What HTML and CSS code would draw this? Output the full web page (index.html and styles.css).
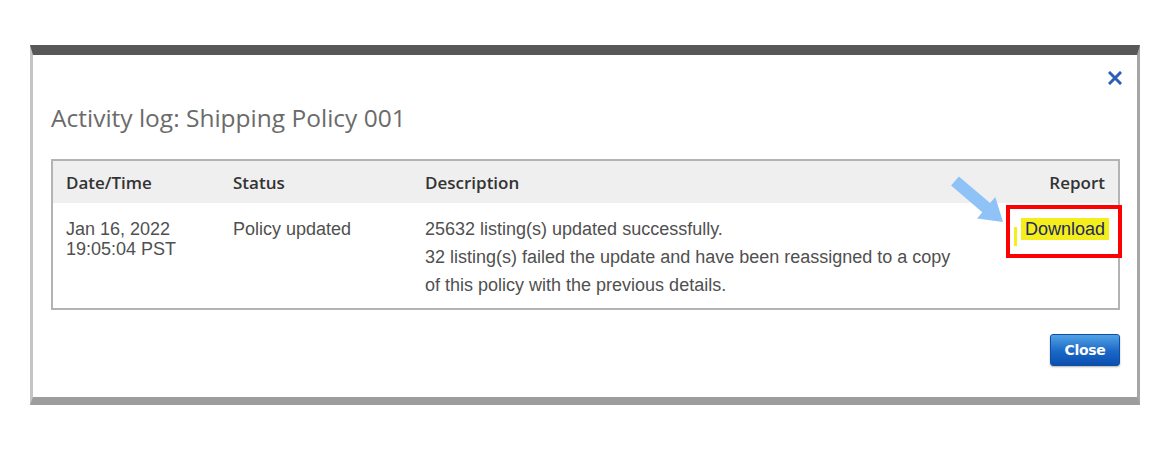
FILE: index.html
```html
<!DOCTYPE html>
<html lang="en">
<head>
  <meta charset="UTF-8" />
  <meta name="viewport" content="width=device-width, initial-scale=1.0"/>
  <title>Activity log</title>
  <link rel="stylesheet" href="styles.css">
</head>
<body>
  <div class="frame">
    <div class="dialog">
      <div class="dialog-top">
        <button class="x-btn" aria-label="Close">
          <svg width="14" height="14" viewBox="0 0 14 14">
            <path d="M2 2 L12 12 M12 2 L2 12" stroke="#2d5fb8" stroke-width="3" stroke-linecap="square" fill="none"/>
          </svg>
        </button>
      </div>

      <h1 class="title">Activity log: Shipping Policy 001</h1>

      <div class="log">
        <div class="log-head">
          <div>Date/Time</div>
          <div>Status</div>
          <div>Description</div>
          <div class="col-report">Report</div>
        </div>
        <div class="log-row">
          <div class="cell-date">Jan 16, 2022<br>19:05:04 PST</div>
          <div class="cell-status">Policy updated</div>
          <div class="cell-desc">
            <p>25632 listing(s) updated successfully.</p>
            <p>32 listing(s) failed the update and have been reassigned to a copy of this policy with the previous details.</p>
          </div>
          <div class="col-report cell-report"><a class="download" href="#">Download</a></div>
        </div>

        <!-- annotation drawn over the table -->
        <svg class="pointer-arrow" width="60" height="52" viewBox="0 0 60 52">
          <polygon points="11.9,2.4 43.1,29.1 48.3,23 56,48 30.1,44.4 35.3,38.3 4.1,11.6" fill="#8fc3f7"/>
        </svg>
        <div class="callout"><span class="tick"></span></div>
      </div>

      <div class="dialog-foot">
        <button class="btn-close">Close</button>
      </div>
    </div>
  </div>
</body>
</html>
```

FILE: styles.css
```css
body {
  margin: 0;
  padding: 45px 0 0 30px;
  background: #fff;
  font-family: "Liberation Sans", Arial, sans-serif;
}
.frame {
  width: 1104px;
  background: #fff;
  border-top: 10px solid #585858;
  border-left: 3px solid #c4c4c4;
  border-right: 3px solid #a6a6a6;
  border-bottom: 8px solid #9d9d9d;
}
.dialog {
  padding: 0 17px 31px 18px;
}
.dialog-top {
  display: flex;
  justify-content: flex-end;
  margin: 16px -2px 0 0;
  height: 14px;
}
.x-btn {
  padding: 0;
  border: none;
  background: none;
  width: 14px;
  height: 14px;
  cursor: pointer;
}
.x-btn svg {
  display: block;
}
.title {
  margin: 17px 0 0 0;
  font-family: "Open Sans", sans-serif;
  font-weight: 400;
  font-size: 24.5px;
  line-height: 32px;
  color: #6b6b6b;
}
.log {
  position: relative;
  margin-top: 25px;
  border: 2px solid #b3b3b3;
}
.log-head,
.log-row {
  display: grid;
  grid-template-columns: 167px 192px 1fr auto;
  padding: 0 13px;
}
.log-head {
  height: 42px;
  align-items: center;
  background: #efefef;
  font-family: "Open Sans", sans-serif;
  font-weight: 600;
  font-size: 17px;
  color: #333;
}
.col-report {
  text-align: right;
}
.log-row {
  padding-top: 12px;
  padding-bottom: 9px;
  font-size: 18px;
  color: #505050;
  line-height: 28px;
}
.cell-date {
  line-height: 20px;
  padding-top: 4px;
}
.cell-desc p {
  margin: 0;
  max-width: 540px;
}
.download {
  color: #1e2a5e;
  text-decoration: none;
  background: #f4ef1c;
  padding: 1px 4px;
  margin-right: -4px;
}
.pointer-arrow {
  position: absolute;
  left: 894px;
  top: 13px;
}
.callout {
  position: absolute;
  left: 953px;
  top: 44px;
  width: 108px;
  height: 45px;
  border: 4px solid #ff0000;
}
.tick {
  position: absolute;
  left: 4px;
  top: 18px;
  width: 3px;
  height: 19px;
  background: #f4ef1c;
}
.dialog-foot {
  display: flex;
  justify-content: flex-end;
  margin-top: 24px;
}
.btn-close {
  width: 70px;
  height: 32px;
  border: 1px solid #0d4fa3;
  border-radius: 3px;
  background: linear-gradient(#52a2e6, #1a68c6 55%, #0b4faf);
  box-shadow: 0 1px 2px rgba(0, 0, 0, 0.3);
  color: #fff;
  font-family: "DejaVu Sans", sans-serif;
  font-weight: bold;
  font-size: 14px;
  letter-spacing: -0.3px;
  cursor: pointer;
}
```
